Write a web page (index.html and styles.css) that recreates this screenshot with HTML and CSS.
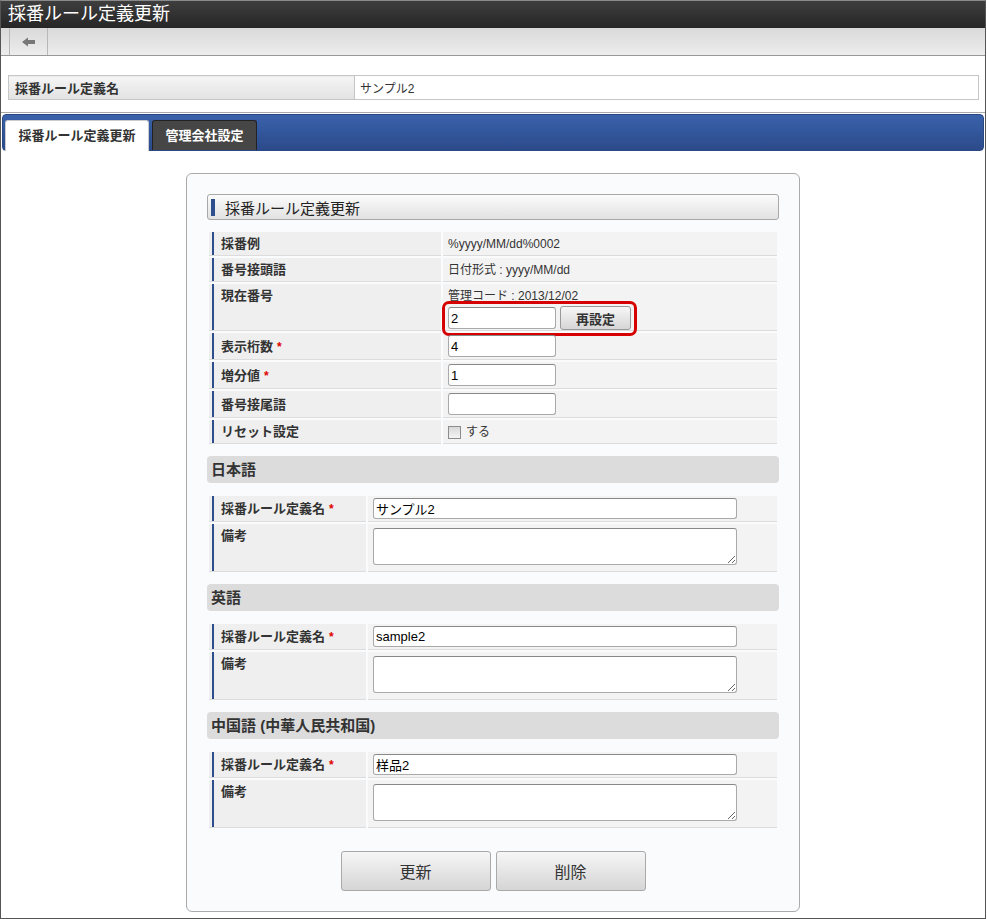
FILE: index.html
```html
<!DOCTYPE html>
<html lang="ja">
<head>
	<meta charset="UTF-8">
	<title>採番ルール定義更新</title>
	<link rel="stylesheet" href="styles.css">
</head>
<body>
	<div class="window">
		<div class="titlebar">採番ルール定義更新</div>
		<div class="toolbar">
			<span class="back-btn">
				<svg width="14" height="10" viewBox="0 0 14 10"><path d="M0 5 L6 0.5 L6 3 L13 3 L13 7 L6 7 L6 9.5 Z" fill="#777"/></svg>
			</span>
		</div>
		<div class="main">
			<table class="name-table">
				<tr><th>採番ルール定義名</th><td>サンプル2</td></tr>
			</table>
		</div>
		<div class="sep"></div>
		<div class="tabbar">
			<div class="tab active">採番ルール定義更新</div>
			<div class="tab other">管理会社設定</div>
		</div>
		<div class="content">
			<div class="form-box">
				<h2 class="box-title">採番ルール定義更新</h2>
				<table class="form-table main-table">
					<tr><th>採番例</th><td>%yyyy/MM/dd%0002</td></tr>
					<tr><th>番号接頭語</th><td>日付形式 : yyyy/MM/dd</td></tr>
					<tr class="current-row">
						<th>現在番号</th>
						<td>
							<div class="current-code">管理コード : 2013/12/02</div>
							<span class="highlight">
								<input class="txt" type="text" value="2">
								<button class="reset-btn">再設定</button>
							</span>
						</td>
					</tr>
					<tr class="input-row"><th>表示桁数<span class="req">*</span></th><td><input class="txt" type="text" value="4"></td></tr>
					<tr class="input-row"><th>増分値<span class="req">*</span></th><td><input class="txt" type="text" value="1"></td></tr>
					<tr class="input-row"><th>番号接尾語</th><td><input class="txt" type="text" value=""></td></tr>
					<tr><th>リセット設定</th><td><label class="check"><input type="checkbox">する</label></td></tr>
				</table>

				<h3 class="lang-title">日本語</h3>
				<table class="form-table lang-table">
					<tr class="input-row"><th>採番ルール定義名<span class="req">*</span></th><td><input class="txt wide" type="text" value="サンプル2"></td></tr>
					<tr class="memo-row"><th>備考</th><td><textarea></textarea></td></tr>
				</table>

				<h3 class="lang-title">英語</h3>
				<table class="form-table lang-table">
					<tr class="input-row"><th>採番ルール定義名<span class="req">*</span></th><td><input class="txt wide" type="text" value="sample2"></td></tr>
					<tr class="memo-row"><th>備考</th><td><textarea></textarea></td></tr>
				</table>

				<h3 class="lang-title">中国語 (中華人民共和国)</h3>
				<table class="form-table lang-table">
					<tr class="input-row"><th>採番ルール定義名<span class="req">*</span></th><td><input class="txt wide" type="text" value="样品2"></td></tr>
					<tr class="memo-row"><th>備考</th><td><textarea></textarea></td></tr>
				</table>

				<div class="buttons">
					<button class="btn">更新</button>
					<button class="btn">削除</button>
				</div>
			</div>
		</div>
	</div>
</body>
</html>
```

FILE: styles.css
```css
*{
	margin: 0;
	padding: 0;
	box-sizing: border-box;
}
body{
	font-family: "Liberation Sans", "Noto Sans CJK JP", sans-serif;
	font-size: 12px;
	color: #333;
	background: #fff;
}
.window{
	width: 986px;
	height: 919px;
	border: 1px solid #555;
	border-top-color: #8a8a8a;
	display: flex;
	flex-direction: column;
}
.titlebar{
	height: 27px;
	line-height: 27px;
	padding-left: 7px;
	font-size: 18px;
	color: #fff;
	background: linear-gradient(#3e3e3e, #262626);
}
.toolbar{
	height: 28px;
	padding-left: 8px;
	display: flex;
	background: linear-gradient(#d9d9d9, #ededed);
	border-bottom: 1px solid #999;
}
.back-btn{
	width: 39px;
	display: flex;
	align-items: center;
	justify-content: center;
	border-left: 1px solid #b8b8b8;
	border-right: 1px solid #b8b8b8;
}
.main{
	padding: 19px 6px 0 7px;
}
.name-table{
	width: 100%;
	border-collapse: collapse;
}
.name-table th{
	width: 346px;
	height: 24px;
	padding-left: 6px;
	text-align: left;
	font-size: 13px;
	border: 1px solid #c6c6c6;
	background: linear-gradient(#f5f5f5, #e2e2e2);
}
.name-table td{
	padding-left: 5px;
	border: 1px solid #c6c6c6;
}
.sep{
	margin-top: 12px;
	border-top: 1px solid #aaa;
}
.tabbar{
	height: 37px;
	margin: 1px 1px 0;
	padding-left: 2px;
	display: flex;
	align-items: flex-end;
	border: 1px solid #2a4884;
	border-radius: 4px;
	background: linear-gradient(#3a62ab, #2b4a8a);
}
.tab{
	height: 30px;
	line-height: 29px;
	text-align: center;
	font-size: 13px;
	font-weight: bold;
	border-radius: 3px 3px 0 0;
}
.tab.active{
	width: 144px;
	height: 31px;
	margin-bottom: -1px;
	color: #333;
	background: #fff;
	border: 1px solid #ccc;
	border-bottom: none;
}
.tab.other{
	width: 105px;
	margin-left: 3px;
	color: #fff;
	background: #464646;
	border: 1px solid #222;
	border-bottom: none;
}
.content{
	padding-top: 22px;
}
.form-box{
	width: 614px;
	margin: 0 auto;
	padding: 20px;
	border: 1px solid #aaa;
	border-radius: 6px;
	background: #fafbfd;
}
.box-title{
	height: 26px;
	display: flex;
	align-items: center;
	font-size: 15px;
	font-weight: normal;
	color: #222;
	border: 1px solid #a8a8a8;
	border-radius: 3px;
	background: linear-gradient(#fbfbfb, #e2e2e2);
}
.box-title::before{
	content: '';
	width: 4px;
	height: 17px;
	margin: 0 10px 0 3px;
	background: #2e4f8f;
}
.form-table{
	width: 100%;
	margin-top: 10px;
	border-collapse: separate;
	border-spacing: 2px;
}
.main-table{
	margin-bottom: 1px;
}
.form-table th{
	padding: 4px 5px 3px 12px;
	line-height: 16px;
	text-align: left;
	font-size: 13px;
	color: #333;
	border-bottom: 1px solid #dcdcdc;
	background: linear-gradient(to right, #efefef 3px, #2d4d8d 3px, #2d4d8d 5px, #efefef 5px);
}
.form-table td{
	padding: 4px 5px 3px;
	line-height: 16px;
	border-bottom: 1px solid #dcdcdc;
	background: #f3f3f3;
}
.main-table th{
	width: 232px;
}
.lang-table{
	margin-top: 11px;
}
.lang-table th{
	width: 157px;
}
.form-table .input-row td{
	padding: 2px 5px;
}
.current-row th,
.current-row td,
.memo-row th{
	vertical-align: top;
}
.current-code{
	line-height: 16px;
}
.highlight{
	display: inline-flex;
	align-items: center;
	margin: -3px 0 -9px -6px;
	padding: 2px 3px 3px 3px;
	border: 3px solid #d60000;
	border-radius: 7px;
}
.req{
	margin-left: 4px;
	font-size: 12px;
	color: #e00000;
	vertical-align: top;
}
.txt{
	width: 108px;
	height: 22px;
	padding: 0 2px;
	font-family: "Liberation Sans", "Noto Sans CJK JP", sans-serif;
	font-size: 13px;
	color: #000;
	background: #fff;
	border: 1px solid #a9a9a9;
	border-top-color: #888;
	border-radius: 3px;
	vertical-align: middle;
}
.txt.wide{
	width: 364px;
	height: 21px;
}
.reset-btn{
	width: 71px;
	height: 24px;
	margin-left: 4px;
	font-family: inherit;
	font-size: 13px;
	font-weight: bold;
	color: #333;
	border: 1px solid #999;
	border-radius: 3px;
	background: linear-gradient(#f7f7f7, #d6d6d6);
}
.check{
	display: flex;
	align-items: center;
	gap: 5px;
}
.check input{
	appearance: none;
	width: 13px;
	height: 13px;
	border: 1px solid #8c8c8c;
	background: linear-gradient(#d8d8d8, #f4f4f4);
}
.memo-row td{
	padding: 4px 5px 6px;
}
textarea{
	display: block;
	width: 364px;
	height: 37px;
	border: 1px solid #a9a9a9;
	border-top-color: #888;
	border-radius: 3px;
	background: #fff;
}
.lang-title{
	height: 27px;
	margin-top: 10px;
	padding-left: 4px;
	line-height: 27px;
	font-size: 15px;
	color: #333;
	background: #dcdcdc;
	border-radius: 4px;
}
.buttons{
	margin-top: 21px;
	display: flex;
	justify-content: center;
	gap: 5px;
}
.btn{
	width: 150px;
	height: 40px;
	font-family: inherit;
	font-size: 16px;
	color: #333;
	border: 1px solid #a9a9a9;
	border-radius: 3px;
	background: linear-gradient(#f6f6f6, #d5d5d5);
}
```
